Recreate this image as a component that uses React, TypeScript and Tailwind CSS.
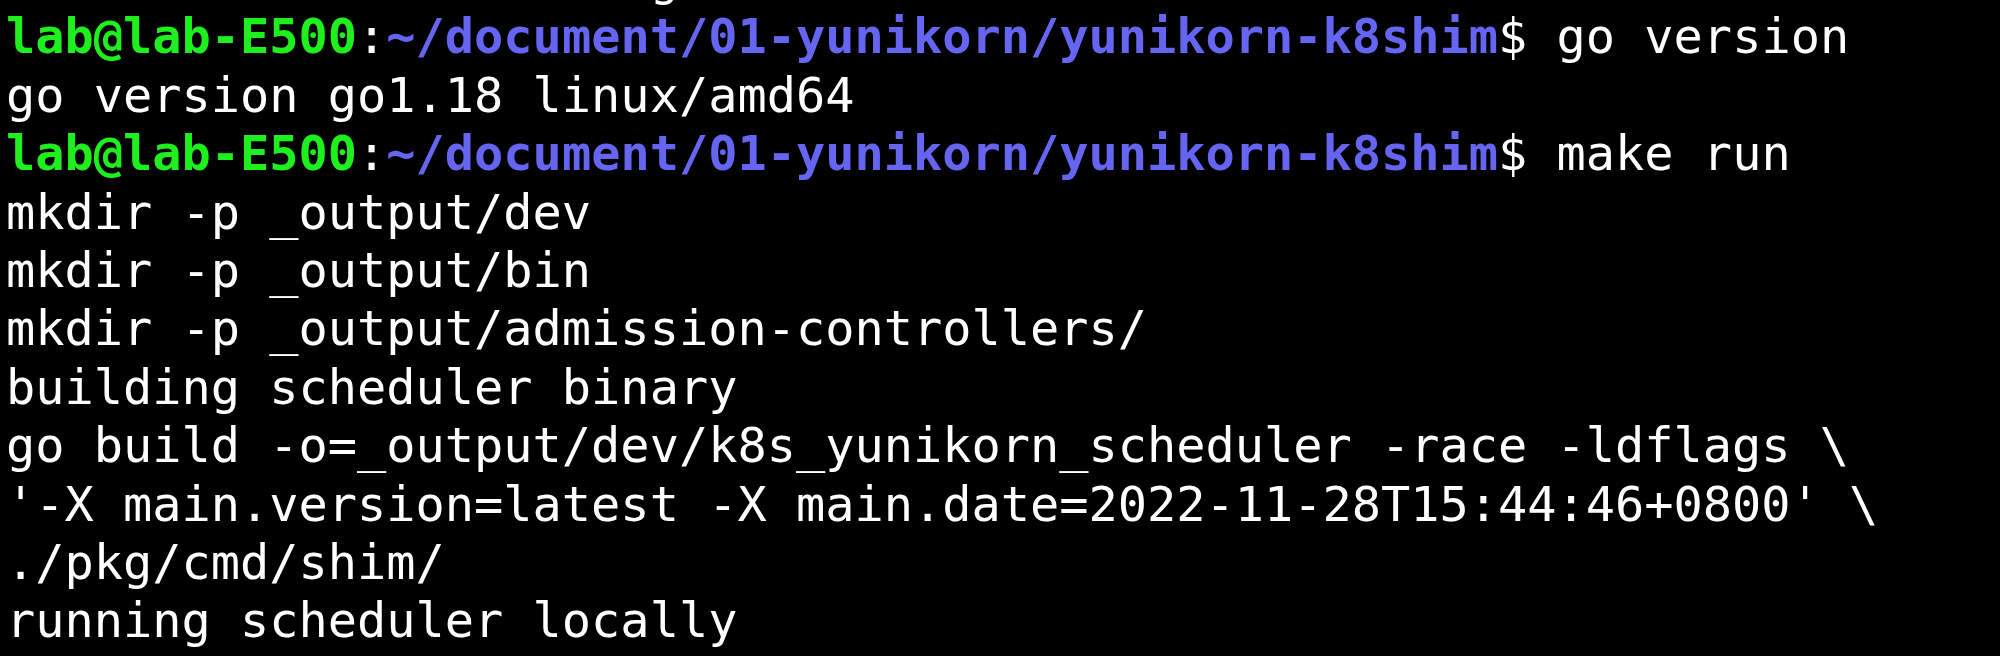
const prompt = "~/document/01-yunikorn/yunikorn-k8shim"

const Prompt = ({ cmd }: { cmd: string }) => (
  <div className="whitespace-pre">
    <span className="font-bold text-[#1ef01e]">lab@lab-E500</span>
    <span>:</span>
    <span className="font-bold text-[#6565f2]">{prompt}</span>
    <span>$ {cmd}</span>
  </div>
)

const output = [
  "mkdir -p _output/dev",
  "mkdir -p _output/bin",
  "mkdir -p _output/admission-controllers/",
  "building scheduler binary",
  "go build -o=_output/dev/k8s_yunikorn_scheduler -race -ldflags \\",
  "'-X main.version=latest -X main.date=2022-11-28T15:44:46+0800' \\",
  "./pkg/cmd/shim/",
  "running scheduler locally",
]

export default function App() {
  return (
    <div className="w-[2000px] h-[656px] overflow-hidden bg-black text-white">
      <div className="mt-[-51px] pl-[6px] font-['DejaVu_Sans_Mono',monospace] text-[48.6px] leading-[58.4px]">
        {/* previous line, only its tail shows above the fold */}
        <div className="whitespace-pre">{"                      g"}</div>
        <Prompt cmd="go version" />
        <div className="whitespace-pre">go version go1.18 linux/amd64</div>
        <Prompt cmd="make run" />
        {output.map((line, i) => (
          <div key={i} className="whitespace-pre">{line}</div>
        ))}
      </div>
    </div>
  )
}
